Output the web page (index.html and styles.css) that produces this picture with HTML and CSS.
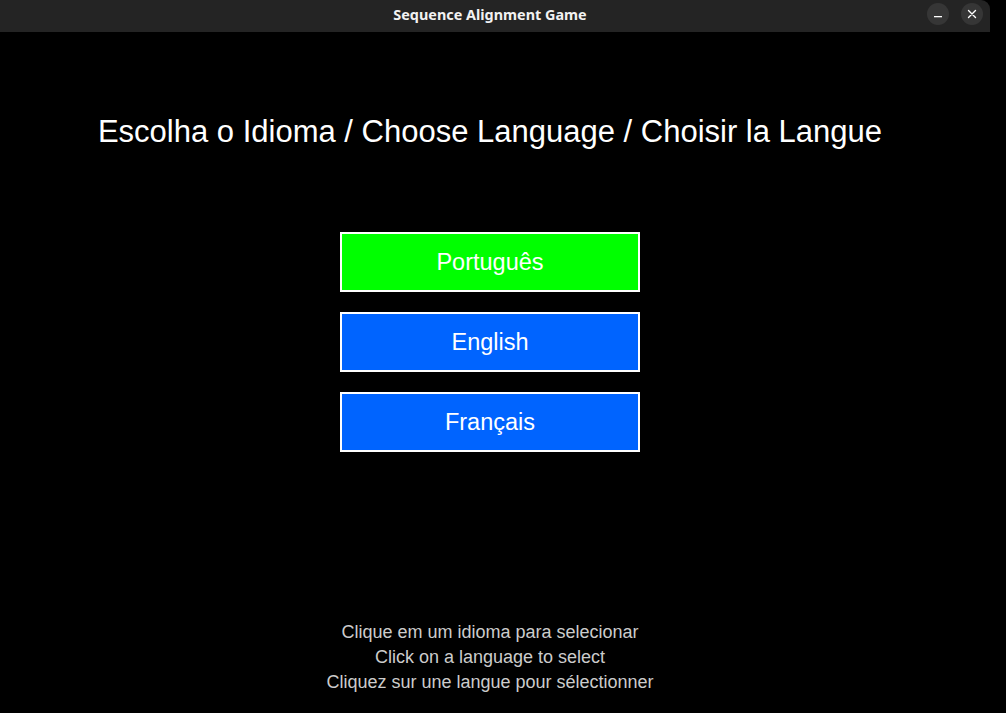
FILE: index.html
```html
<!DOCTYPE html>
<html>
<head>
<meta charset="utf-8">
<title>Sequence Alignment Game</title>
<link rel="stylesheet" href="styles.css">
</head>
<body>
<div class="window">
  <header class="titlebar">
    <div class="title">Sequence Alignment Game</div>
    <div class="controls">
      <button class="ctl" aria-label="Minimize">
        <svg width="10" height="10" viewBox="0 0 10 10"><rect x="1" y="7" width="8" height="1.3" fill="#fff"/></svg>
      </button>
      <button class="ctl" aria-label="Close">
        <svg width="10" height="10" viewBox="0 0 10 10"><path d="M1.5 1.5 L8.5 8.5 M8.5 1.5 L1.5 8.5" stroke="#fff" stroke-width="1.4" stroke-linecap="round"/></svg>
      </button>
    </div>
  </header>
  <main class="canvas">
    <h1 class="heading">Escolha o Idioma / Choose Language / Choisir la Langue</h1>
    <div class="langs">
      <button class="lang selected">Português</button>
      <button class="lang">English</button>
      <button class="lang">Français</button>
    </div>
    <div class="hints">
      <p>Clique em um idioma para selecionar</p>
      <p>Click on a language to select</p>
      <p>Cliquez sur une langue pour sélectionner</p>
    </div>
  </main>
</div>
</body>
</html>
```

FILE: styles.css
```css
html, body {
  margin: 0;
  padding: 0;
  background: #000;
  height: 100%;
  overflow: hidden;
}
.window {
  width: 990px;
  height: 713px;
  display: flex;
  flex-direction: column;
  background: #000;
}
.titlebar {
  height: 32px;
  flex: none;
  background: #242424;
  border-top-right-radius: 9px;
  display: flex;
  align-items: center;
  position: relative;
}
.title {
  width: 980px;
  text-align: center;
  color: #f2f2f2;
  font-family: "Noto Sans", "DejaVu Sans", sans-serif;
  font-weight: 700;
  font-size: 14.4px;
  padding-bottom: 4px;
}
.controls {
  position: absolute;
  right: 7px;
  top: 3px;
  display: flex;
  gap: 12px;
}
.ctl {
  width: 22px;
  height: 22px;
  border-radius: 50%;
  border: none;
  padding: 0;
  background: #363636;
  display: flex;
  align-items: center;
  justify-content: center;
}
.canvas {
  width: 980px;
  display: flex;
  flex-direction: column;
  align-items: center;
  font-family: "Liberation Sans", Arial, sans-serif;
  color: #fff;
}
.heading {
  margin: 80px 0 0;
  font-weight: 400;
  font-size: 31px;
  line-height: 40px;
  white-space: nowrap;
}
.langs {
  margin-top: 80px;
  display: flex;
  flex-direction: column;
  gap: 20px;
}
.lang {
  width: 300px;
  height: 60px;
  box-sizing: border-box;
  border: 2px solid #fff;
  background: #0064ff;
  color: #fff;
  font-family: "Liberation Sans", Arial, sans-serif;
  font-size: 23.5px;
  padding: 0;
}
.lang.selected {
  background: #00ff00;
}
.hints {
  margin-top: 168px;
  text-align: center;
  color: #cccccc;
  font-size: 18px;
  line-height: 25px;
}
.hints p {
  margin: 0;
}
```
